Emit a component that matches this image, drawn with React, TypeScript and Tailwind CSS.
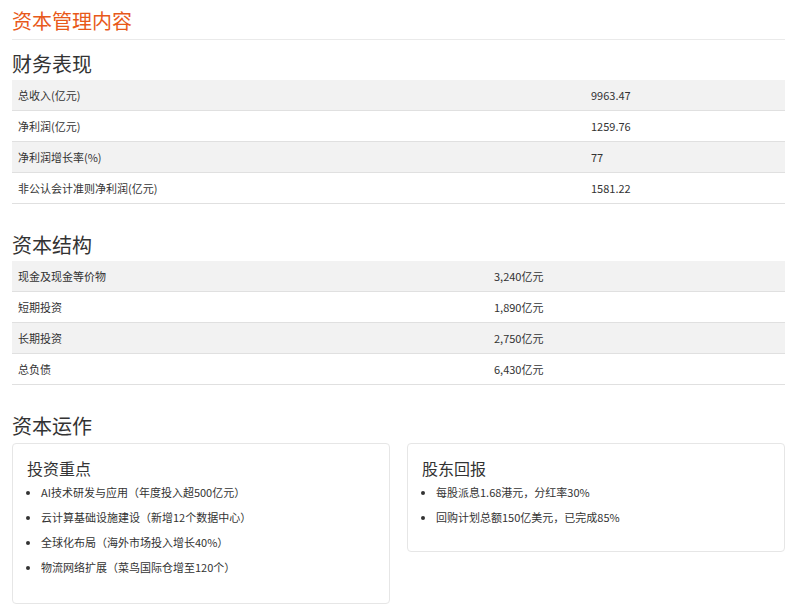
const font = { fontFamily: '"Microsoft YaHei", "Noto Sans CJK SC", "Liberation Sans", sans-serif' }

const fin = [
  ['总收入(亿元)', '9963.47'],
  ['净利润(亿元)', '1259.76'],
  ['净利润增长率(%)', '77'],
  ['非公认会计准则净利润(亿元)', '1581.22'],
]
const cap = [
  ['现金及现金等价物', '3,240亿元'],
  ['短期投资', '1,890亿元'],
  ['长期投资', '2,750亿元'],
  ['总负债', '6,430亿元'],
]

function Table({ rows, col }: { rows: string[][]; col: string }) {
  return (
    <div className="flex flex-col">
      {rows.map((r, i) => (
        <div key={i} className={`flex h-[31px] items-center border-b border-[#e0e0e0] text-[11px] text-[#333] ${i % 2 === 0 ? 'bg-[#f2f2f2]' : 'bg-white'}`}>
          <div className={`${col} pl-[6px]`}>{r[0]}</div>
          <div>{r[1]}</div>
        </div>
      ))}
    </div>
  )
}

function Card({ title, items, h }: { title: string; items: string[]; h: string }) {
  return (
    <div className={`flex-1 rounded border border-[#e6e6e6] px-[14px] pt-[14px] ${h}`}>
      <h4 className="text-[16px] leading-[20px] text-[#333]">{title}</h4>
      <ul className="mt-[6px] flex flex-col gap-[9px] pl-[14px] text-[11px] leading-[16px] text-[#333] list-disc">
        {items.map(t => <li key={t}>{t}</li>)}
      </ul>
    </div>
  )
}

export default function App() {
  return (
    <div style={font} className="w-[795px] h-[612px] overflow-hidden bg-white pl-[12px] pr-[10px] pt-[8px]">
      <h1 className="text-[20px] leading-[26px] text-[#e8591a] pb-[5px] border-b border-[#eaeaea]">资本管理内容</h1>
      <h2 className="mt-[11px] text-[20px] leading-[26px] text-[#333] pb-[3px]">财务表现</h2>
      <Table rows={fin} col="w-[579px]" />
      <h2 className="mt-[28px] text-[20px] leading-[26px] text-[#333] pb-[3px]">资本结构</h2>
      <Table rows={cap} col="w-[482px]" />
      <h2 className="mt-[28px] text-[20px] leading-[26px] text-[#333] pb-[4px]">资本运作</h2>
      <div className="flex items-start gap-[17px]">
        <Card title="投资重点" h="h-[161px]" items={['AI技术研发与应用（年度投入超500亿元）', '云计算基础设施建设（新增12个数据中心）', '全球化布局（海外市场投入增长40%）', '物流网络扩展（菜鸟国际仓增至120个）']} />
        <Card title="股东回报" h="h-[109px]" items={['每股派息1.68港元，分红率30%', '回购计划总额150亿美元，已完成85%']} />
      </div>
    </div>
  )
}
